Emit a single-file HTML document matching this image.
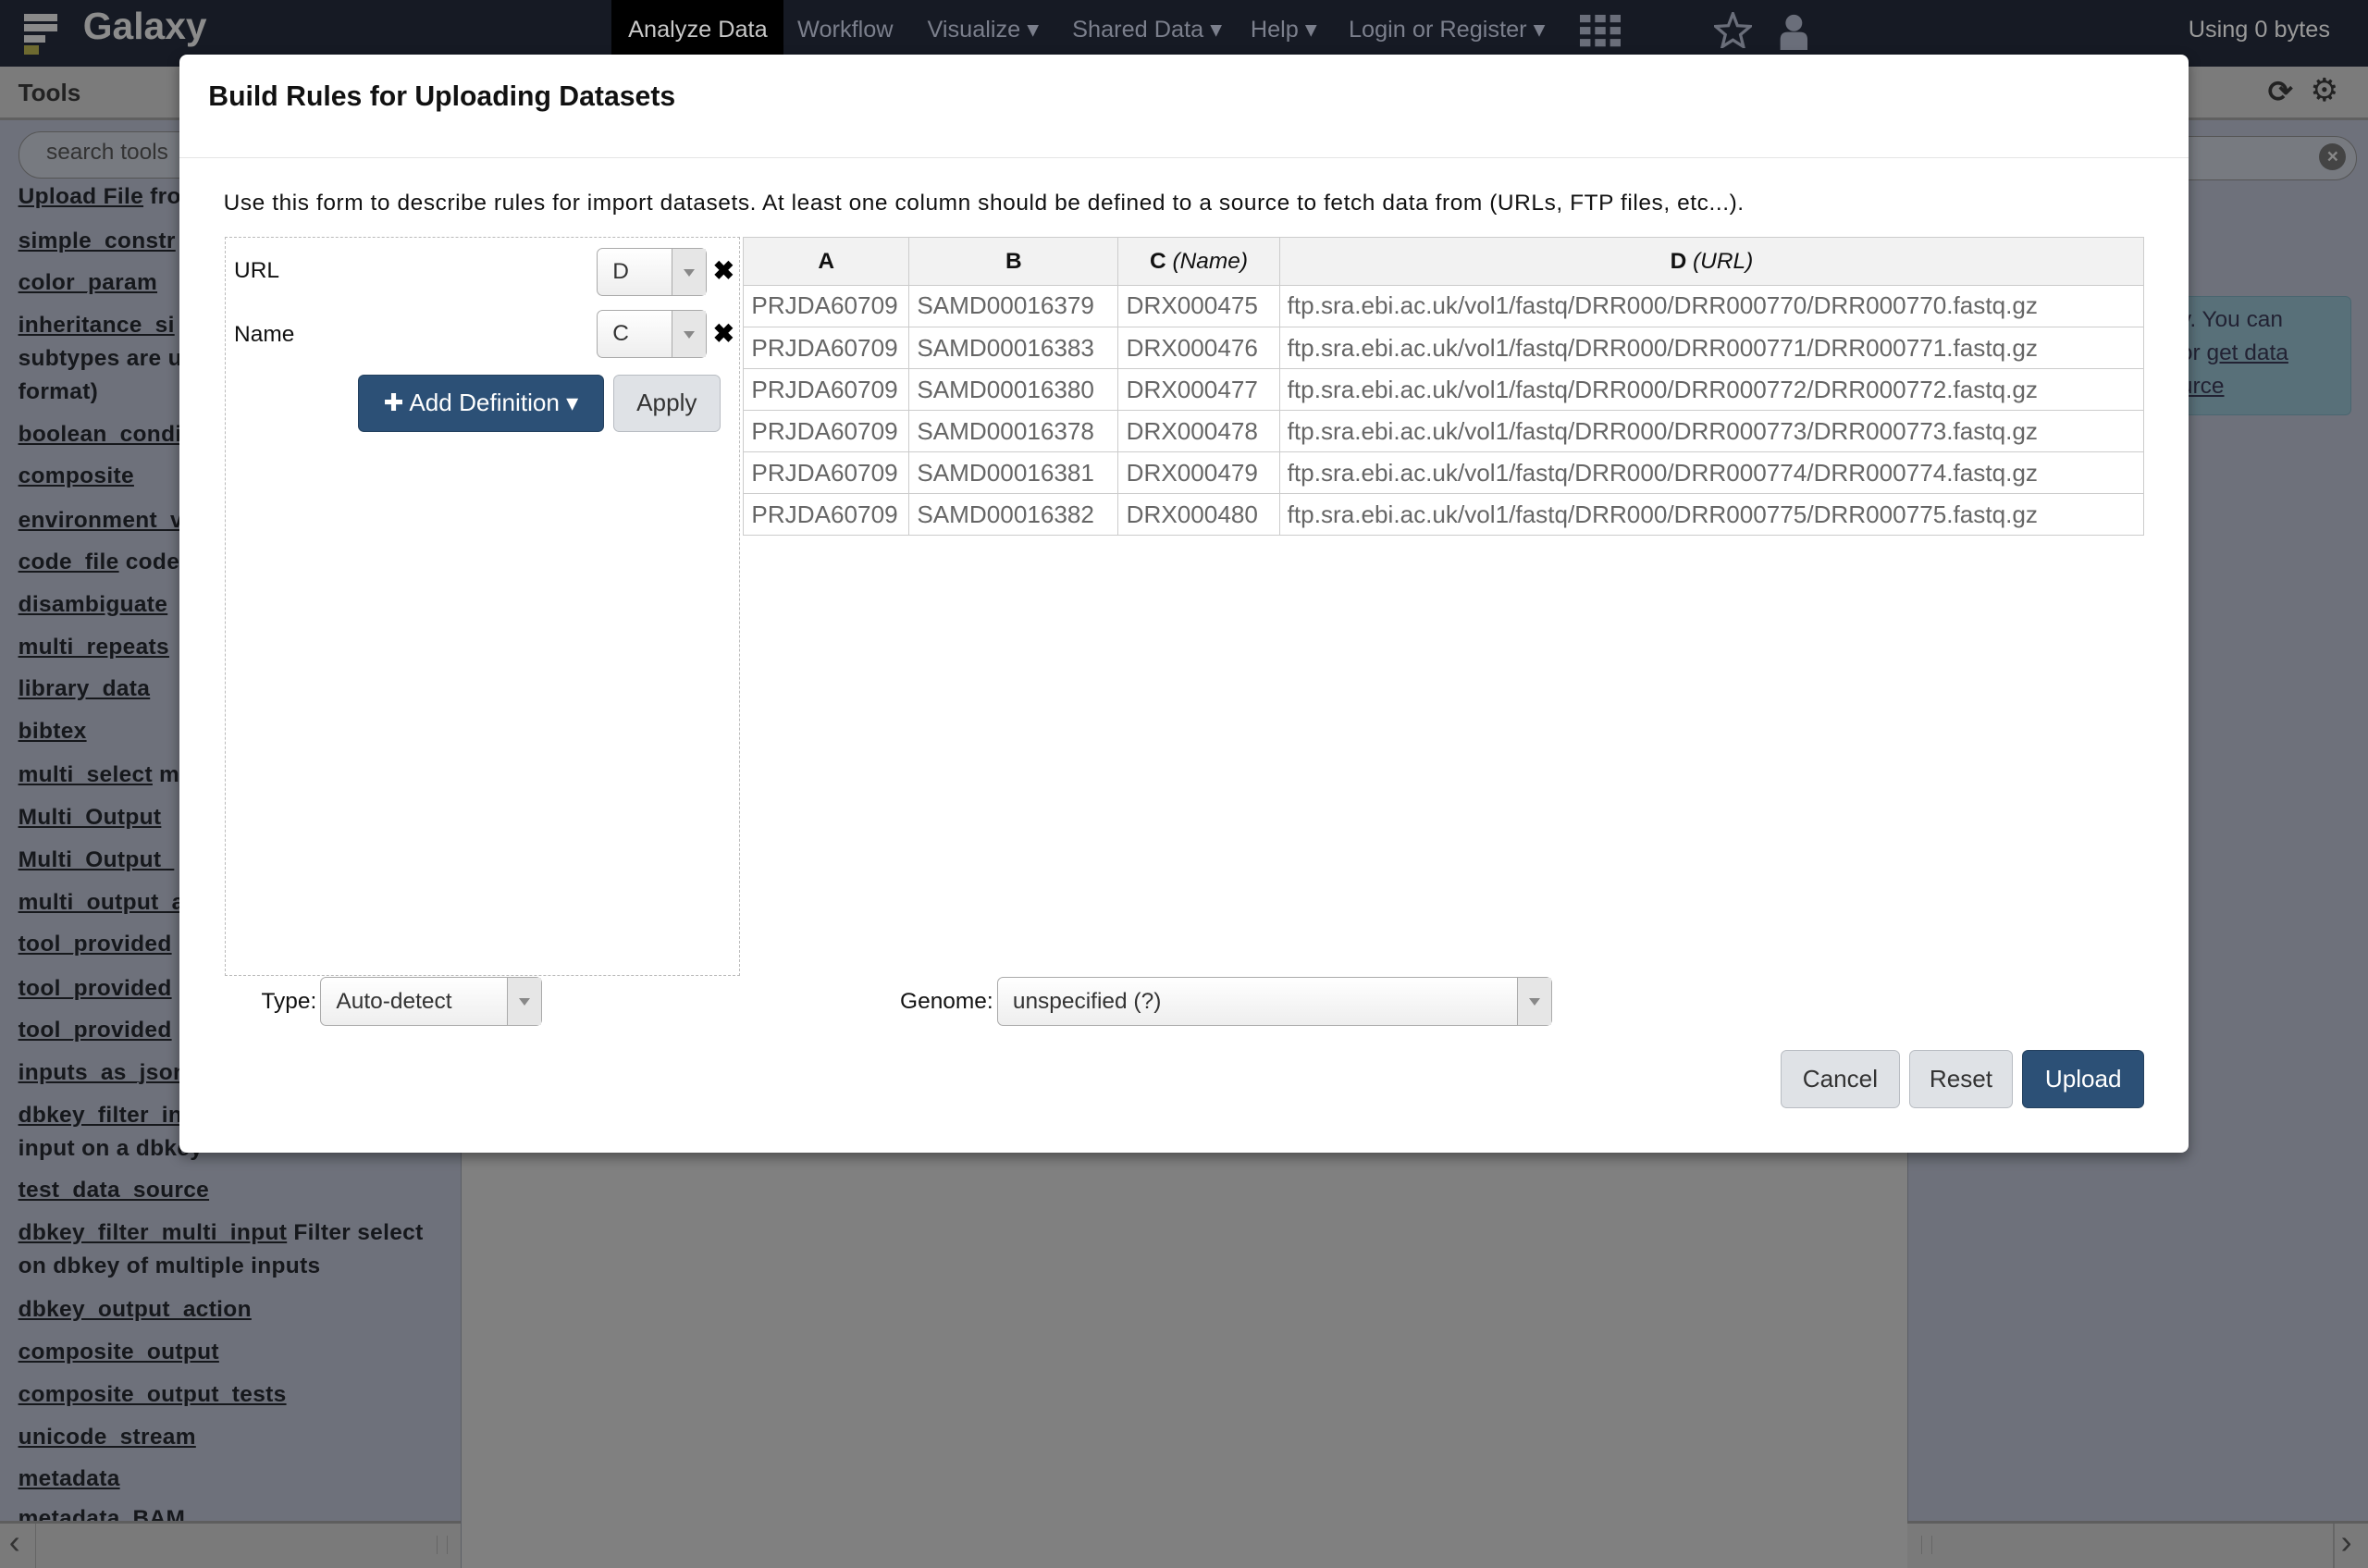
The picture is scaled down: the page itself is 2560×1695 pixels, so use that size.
<!DOCTYPE html>
<html><head><meta charset="utf-8">
<style>
html,body{margin:0;padding:0;overflow:hidden;background:#808080;}
#root{position:relative;width:1568px;height:1038px;zoom:1.632653;font-family:"Liberation Sans",sans-serif;overflow:hidden;background:#808080;}
.a{position:absolute;}
.nav{left:0;top:0;width:1568px;height:44px;background:#161a24;}
.navitem{top:0;height:40px;line-height:40px;font-size:15.5px;color:#7b7f8c;}
.lp{left:0;top:44px;width:305px;height:994px;background:#6e717b;border-right:1px solid #5c5f66;}
.rp{left:1263px;top:44px;width:305px;height:994px;background:#6e717b;border-left:1px solid #5c5f66;}
.ph{height:34px;background:#7b7b7b;border-bottom:2px solid #606060;}
.tool{left:12px;font-size:15px;font-weight:bold;color:#16181c;white-space:nowrap;letter-spacing:0.2px;}
.tool u{text-decoration:underline;}
.modal{left:119px;top:36px;width:1330px;height:727px;background:#fff;border-radius:5px;box-shadow:0 3px 8px rgba(0,0,0,.4);}
.sel{background:linear-gradient(#fff,#eee);border:1px solid #aaa;border-radius:4px;font-size:15px;color:#333;box-sizing:border-box;}
.sel .arr{position:absolute;right:0;top:0;bottom:0;width:22px;border-left:1px solid #aaa;background:#e6e6e6;}
.sel .arr:after{content:"";position:absolute;left:7px;top:50%;margin-top:-2px;border:4px solid transparent;border-top:5px solid #888;}
table{border-collapse:collapse;font-size:16px;}
td,th{border:1px solid #ccc;height:27px;padding:0 5px;white-space:nowrap;color:#666;text-align:left;}
th{background:#f2f2f2;color:#111;text-align:center;height:31px;font-weight:bold;font-size:15px;}
th i{font-weight:normal;}
.btn{border-radius:4px;font-size:16px;text-align:center;box-sizing:border-box;}
.bg{background:#dfe2e6;border:1px solid #b8bcc2;color:#333;}
.bp{background:#2c5076;border:1px solid #23405e;color:#fff;}
</style></head><body><div id="root">

<div class="a nav"></div>
<div class="a" style="left:16px;top:9px;width:22px;height:5px;background:#8a8a8a"></div>
<div class="a" style="left:16px;top:16px;width:22px;height:5px;background:#8a8a8a"></div>
<div class="a" style="left:16px;top:23px;width:14px;height:5px;background:#8a8a8a"></div>
<div class="a" style="left:16px;top:30px;width:10px;height:6px;background:#6e6a30"></div>
<div class="a" style="left:55px;top:3px;font-size:25px;font-weight:bold;color:#8c8c8c;">Galaxy</div>
<div class="a" style="left:405px;top:0;width:114px;height:36px;background:#000;"></div>
<div class="a navitem" style="left:416px;color:#c8c8c8;">Analyze Data</div>
<div class="a navitem" style="left:528px;">Workflow</div>
<div class="a navitem" style="left:614px;">Visualize ▾</div>
<div class="a navitem" style="left:710px;">Shared Data ▾</div>
<div class="a navitem" style="left:828px;">Help ▾</div>
<div class="a navitem" style="left:893px;">Login or Register ▾</div>
<svg class="a" style="left:1046px;top:10px" width="27" height="21"><g fill="#6a6e7a"><rect x="0" y="0" width="7" height="5"/><rect x="10" y="0" width="7" height="5"/><rect x="20" y="0" width="7" height="5"/><rect x="0" y="8" width="7" height="5"/><rect x="10" y="8" width="7" height="5"/><rect x="20" y="8" width="7" height="5"/><rect x="0" y="16" width="7" height="5"/><rect x="10" y="16" width="7" height="5"/><rect x="20" y="16" width="7" height="5"/></g></svg>
<svg class="a" style="left:1135px;top:8px" width="25" height="24"><path d="M12.5 1 L15.5 9 L24 9.5 L17.5 15 L19.5 23 L12.5 18.5 L5.5 23 L7.5 15 L1 9.5 L9.5 9 Z" fill="none" stroke="#6a6e7a" stroke-width="2"/></svg>
<svg class="a" style="left:1178px;top:9px" width="20" height="24"><circle cx="10" cy="6" r="5.5" fill="#6a6e7a"/><path d="M1 24 V17 Q1 12 6 12 H14 Q19 12 19 17 V24 Z" fill="#6a6e7a"/></svg>
<div class="a navitem" style="left:1449px;color:#9a9a9a;">Using 0 bytes</div>

<div class="a lp">
 <div class="ph"><span style="position:absolute;left:12px;top:8px;font-size:16px;font-weight:bold;color:#222">Tools</span></div>
 <div class="a" style="left:12px;top:43px;width:300px;height:30px;border:1px solid #555;border-radius:15px;background:#777a80;"><span style="position:absolute;left:18px;top:5px;font-size:15px;color:#333">search tools</span></div>
</div>
<div class="a tool" style="top:122px"><u>Upload File</u> from</div>
<div class="a tool" style="top:151px"><u>simple_constr</u></div>
<div class="a tool" style="top:179px"><u>color_param</u></div>
<div class="a tool" style="top:207px"><u>inheritance_si</u></div>
<div class="a tool" style="top:229px">subtypes are u</div>
<div class="a tool" style="top:251px">format)</div>
<div class="a tool" style="top:279px"><u>boolean_condi</u></div>
<div class="a tool" style="top:307px"><u>composite</u></div>
<div class="a tool" style="top:336px"><u>environment_v</u></div>
<div class="a tool" style="top:364px"><u>code_file</u> code</div>
<div class="a tool" style="top:392px"><u>disambiguate</u></div>
<div class="a tool" style="top:420px"><u>multi_repeats</u></div>
<div class="a tool" style="top:448px"><u>library_data</u></div>
<div class="a tool" style="top:476px"><u>bibtex</u></div>
<div class="a tool" style="top:505px"><u>multi_select</u> m</div>
<div class="a tool" style="top:533px"><u>Multi_Output</u></div>
<div class="a tool" style="top:561px"><u>Multi_Output_</u></div>
<div class="a tool" style="top:589px"><u>multi_output_a</u></div>
<div class="a tool" style="top:617px"><u>tool_provided</u></div>
<div class="a tool" style="top:646px"><u>tool_provided</u></div>
<div class="a tool" style="top:674px"><u>tool_provided</u></div>
<div class="a tool" style="top:702px"><u>inputs_as_json</u></div>
<div class="a tool" style="top:730px"><u>dbkey_filter_in</u></div>
<div class="a tool" style="top:752px">input on a dbkey</div>
<div class="a tool" style="top:780px"><u>test_data_source</u></div>
<div class="a tool" style="top:808px"><u>dbkey_filter_multi_input</u> Filter select</div>
<div class="a tool" style="top:830px">on dbkey of multiple inputs</div>
<div class="a tool" style="top:859px"><u>dbkey_output_action</u></div>
<div class="a tool" style="top:887px"><u>composite_output</u></div>
<div class="a tool" style="top:915px"><u>composite_output_tests</u></div>
<div class="a tool" style="top:943px"><u>unicode_stream</u></div>
<div class="a tool" style="top:971px"><u>metadata</u></div>
<div class="a tool" style="top:997px"><u>metadata_BAM</u></div>
<div class="a" style="left:0;top:1007px;width:305px;height:31px;background:#7a7a7a;border-top:2px solid #5e5e5e;"></div>
<div class="a" style="left:23px;top:1009px;width:1px;height:29px;background:#666"></div>
<div class="a" style="left:6px;top:1008px;font-size:22px;color:#333">‹</div>
<div class="a" style="left:289px;top:1017px;width:6px;height:12px;border-left:1px solid #666;border-right:1px solid #666;"></div>

<div class="a rp">
 <div class="ph"></div>
 <div class="a" style="left:100px;top:46px;width:196px;height:28px;border:1px solid #555;border-radius:15px;background:#777a80;"></div>
 <div class="a" style="left:272px;top:51px;width:18px;height:18px;border-radius:9px;background:#444;color:#888;font-size:13px;line-height:18px;text-align:center;font-weight:bold">×</div>
 <div class="a" style="left:238px;top:5px;font-size:20px;color:#222;font-weight:bold">⟳</div>
 <div class="a" style="left:266px;top:4px;font-size:21px;color:#222">⚙</div>
 <div class="a" style="left:170px;top:152px;width:122px;height:78px;background:#587079;border:1px solid #4a6670;border-radius:4px;"></div>
 <div class="a" style="left:180px;top:157px;font-size:15px;color:#223;line-height:22px;">y. You can<br>or <u>get data</u><br><u>urce</u></div>
</div>
<div class="a" style="left:1263px;top:1007px;width:305px;height:31px;background:#7a7a7a;border-top:2px solid #5e5e5e;"></div>
<div class="a" style="left:1545px;top:1009px;width:1px;height:29px;background:#666"></div>
<div class="a" style="left:1550px;top:1008px;font-size:22px;color:#333">›</div>
<div class="a" style="left:1272px;top:1017px;width:6px;height:12px;border-left:1px solid #666;border-right:1px solid #666;"></div>

<div class="a modal">
 <div class="a" style="left:19px;top:18px;font-size:18.5px;font-weight:bold;color:#111;">Build Rules for Uploading Datasets</div>
 <div class="a" style="left:0;top:68px;width:1330px;height:1px;background:#e5e5e5"></div>
 <div class="a" style="left:29px;top:90px;font-size:15px;color:#111;white-space:nowrap;letter-spacing:0.35px">Use this form to describe rules for import datasets. At least one column should be defined to a source to fetch data from (URLs, FTP files, etc...).</div>

 <div class="a" style="left:30px;top:121px;width:340px;height:488px;border:1px dashed #bbb;"></div>
 <div class="a" style="left:36px;top:135px;font-size:15px;color:#111">URL</div>
 <div class="a sel" style="left:276px;top:128px;width:73px;height:32px;"><span style="position:absolute;left:10px;top:7px">D</span><div class="arr"></div></div>
 <div class="a" style="left:353px;top:133px;font-size:17px;font-weight:bold">✖</div>
 <div class="a" style="left:36px;top:177px;font-size:15px;color:#111">Name</div>
 <div class="a sel" style="left:276px;top:169px;width:73px;height:32px;"><span style="position:absolute;left:10px;top:7px">C</span><div class="arr"></div></div>
 <div class="a" style="left:353px;top:175px;font-size:17px;font-weight:bold">✖</div>
 <div class="a btn bp" style="left:118px;top:212px;width:163px;height:38px;line-height:36px;">✚ Add Definition ▾</div>
 <div class="a btn bg" style="left:287px;top:212px;width:71px;height:38px;line-height:36px;">Apply</div>

 <table class="a" style="left:373px;top:121px;width:928px;">
  <tr><th style="width:99px">A</th><th style="width:128px">B</th><th style="width:96px">C <i>(Name)</i></th><th>D <i>(URL)</i></th></tr>
  <tr><td>PRJDA60709</td><td>SAMD00016379</td><td>DRX000475</td><td>ftp.sra.ebi.ac.uk/vol1/fastq/DRR000/DRR000770/DRR000770.fastq.gz</td></tr>
  <tr><td>PRJDA60709</td><td>SAMD00016383</td><td>DRX000476</td><td>ftp.sra.ebi.ac.uk/vol1/fastq/DRR000/DRR000771/DRR000771.fastq.gz</td></tr>
  <tr><td>PRJDA60709</td><td>SAMD00016380</td><td>DRX000477</td><td>ftp.sra.ebi.ac.uk/vol1/fastq/DRR000/DRR000772/DRR000772.fastq.gz</td></tr>
  <tr><td>PRJDA60709</td><td>SAMD00016378</td><td>DRX000478</td><td>ftp.sra.ebi.ac.uk/vol1/fastq/DRR000/DRR000773/DRR000773.fastq.gz</td></tr>
  <tr><td>PRJDA60709</td><td>SAMD00016381</td><td>DRX000479</td><td>ftp.sra.ebi.ac.uk/vol1/fastq/DRR000/DRR000774/DRR000774.fastq.gz</td></tr>
  <tr><td>PRJDA60709</td><td>SAMD00016382</td><td>DRX000480</td><td>ftp.sra.ebi.ac.uk/vol1/fastq/DRR000/DRR000775/DRR000775.fastq.gz</td></tr>
 </table>

 <div class="a" style="left:54px;top:619px;font-size:15px;color:#111">Type:</div>
 <div class="a sel" style="left:93px;top:611px;width:147px;height:32px;"><span style="position:absolute;left:10px;top:7px">Auto-detect</span><div class="arr"></div></div>
 <div class="a" style="left:477px;top:619px;font-size:15px;color:#111">Genome:</div>
 <div class="a sel" style="left:541px;top:611px;width:368px;height:32px;"><span style="position:absolute;left:10px;top:7px">unspecified (?)</span><div class="arr"></div></div>

 <div class="a btn bg" style="left:1060px;top:659px;width:79px;height:39px;line-height:37px;">Cancel</div>
 <div class="a btn bg" style="left:1145px;top:659px;width:69px;height:39px;line-height:37px;">Reset</div>
 <div class="a btn bp" style="left:1220px;top:659px;width:81px;height:39px;line-height:37px;">Upload</div>
</div>
</div></body></html>
